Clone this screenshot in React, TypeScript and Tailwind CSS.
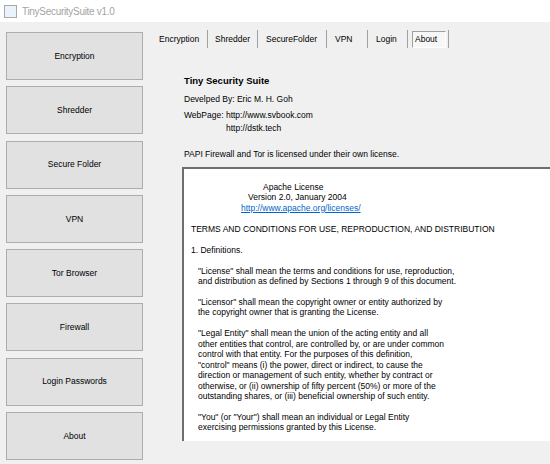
import React from 'react';

const sideButtons = [
  'Encryption',
  'Shredder',
  'Secure Folder',
  'VPN',
  'Tor Browser',
  'Firewall',
  'Login Passwords',
  'About',
];

const tabs = [
  {label: 'Encryption', cls: 'w-[58px] pl-[9px]'},
  {label: 'Shredder', cls: 'w-[50px] pl-[7px]'},
  {label: 'SecureFolder', cls: 'w-[69px] pl-[8px]'},
  {label: 'VPN', cls: 'w-[41px] pl-[8px]'},
  {label: 'Login', cls: 'w-[40px] pl-[8px]'},
];

// license text: [indent class, text]
const license: Array<[string, string] | null> = [
  ['pl-[79px]', 'Apache License'],
  ['pl-[64px]', 'Version 2.0, January 2004'],
  ['link', 'http://www.apache.org/licenses/'],
  null,
  ['pl-[7px]', 'TERMS AND CONDITIONS FOR USE, REPRODUCTION, AND DISTRIBUTION'],
  null,
  ['pl-[7px]', '1. Definitions.'],
  null,
  ['pl-[14px]', '"License" shall mean the terms and conditions for use, reproduction,'],
  ['pl-[14px]', 'and distribution as defined by Sections 1 through 9 of this document.'],
  null,
  ['pl-[14px]', '"Licensor" shall mean the copyright owner or entity authorized by'],
  ['pl-[14px]', 'the copyright owner that is granting the License.'],
  null,
  ['pl-[14px]', '"Legal Entity" shall mean the union of the acting entity and all'],
  ['pl-[14px]', 'other entities that control, are controlled by, or are under common'],
  ['pl-[14px]', 'control with that entity. For the purposes of this definition,'],
  ['pl-[14px]', '"control" means (i) the power, direct or indirect, to cause the'],
  ['pl-[14px]', 'direction or management of such entity, whether by contract or'],
  ['pl-[14px]', 'otherwise, or (ii) ownership of fifty percent (50%) or more of the'],
  ['pl-[14px]', 'outstanding shares, or (iii) beneficial ownership of such entity.'],
  null,
  ['pl-[14px]', '"You" (or "Your") shall mean an individual or Legal Entity'],
  ['pl-[14px]', 'exercising permissions granted by this License.'],
];

export default function App() {
  return (
    <div className="w-[550px] h-[464px] overflow-hidden bg-[#f0f0f0] font-['Liberation_Sans',Arial,sans-serif] text-black">
      {/* title bar */}
      <div className="h-[22px] bg-white flex items-center">
        <div className="ml-[4px] w-[13px] h-[13px] border border-[#a9a9a9] bg-[#eaf2fb]" />
        <span className="ml-[5px] text-[10px] tracking-[-0.3px] text-[#a3a3a3]">TinySecuritySuite v1.0</span>
      </div>

      <div className="flex">
        {/* side menu */}
        <div className="pl-[6px] pt-[10px] flex flex-col gap-[6.3px]">
          {sideButtons.map((b) => (
            <div
              key={b}
              className="w-[137px] h-[48px] border border-[#adadad] bg-[#e1e1e1] flex items-center justify-center text-[8.5px]"
            >
              {b}
            </div>
          ))}
        </div>

        {/* right side */}
        <div className="ml-[7px] pt-[8px] flex-1 min-w-0">
          <div className="flex h-[18px] text-[8.5px]">
            {tabs.map((t) => (
              <div key={t.label} className={`${t.cls} h-[18px] flex items-center border-r border-[#a0a0a0]`}>
                {t.label}
              </div>
            ))}
            <div className="w-[41px] h-[18px] flex items-center border-r border-[#a0a0a0] pl-[4px]">
              <div className="w-[34px] h-[17px] border-t border-l border-[#a0a0a0] border-r border-b border-r-white border-b-white bg-[#f7f7f7] flex items-center pl-[2px]">
                About
              </div>
            </div>
          </div>

          <div className="pl-[34px] pt-[27px] text-[8.5px]">
            <div className="font-bold text-[9.5px] leading-[11px]">Tiny Security Suite</div>
            <div className="mt-[8px] leading-[11px]">Develped By: Eric M. H. Goh</div>
            <div className="mt-[5px] leading-[11px]">WebPage: http://www.svbook.com</div>
            <div className="mt-[2px] leading-[11px] pl-[42px]">http://dstk.tech</div>
            <div className="mt-[15px] leading-[11px]">PAPI Firewall and Tor is licensed under their own license.</div>
          </div>

          <div className="ml-[32px] mt-[7px] w-[400px] h-[274px] bg-white border-t-2 border-l-2 border-[#6e6e6e] pt-[13px] text-[8.5px] leading-[10.45px] whitespace-pre">
            {license.map((l, i) =>
              l === null ? (
                <div key={i} className="h-[10.45px]" />
              ) : l[0] === 'link' ? (
                <div key={i} className="pl-[57px]">
                  <span className="text-[#0066cc] underline">{l[1]}</span>
                </div>
              ) : (
                <div key={i} className={l[0]}>
                  {l[1]}
                </div>
              ),
            )}
          </div>
        </div>
      </div>
    </div>
  );
}
